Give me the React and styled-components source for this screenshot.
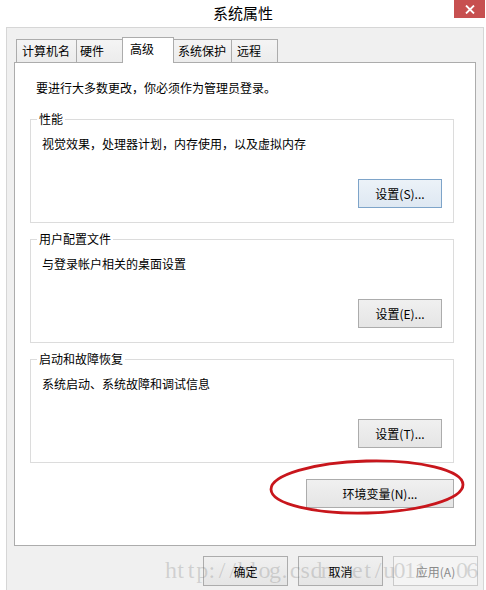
import React from 'react';
import styled, { createGlobalStyle, css } from 'styled-components';

const Global = createGlobalStyle`
  html, body { margin: 0; padding: 0; background: #fff; }
  body {
    font-family: "Noto Sans CJK SC", "Noto Sans", sans-serif;
    font-size: 12px;
    color: #000;
  }
  * { box-sizing: border-box; }
`;

const Window = styled.div`
  position: relative;
  width: 486px;
  height: 590px;
  background: #fff;
  display: flex;
  flex-direction: column;
  overflow: hidden;
`;

const TitleBar = styled.div`
  flex-shrink: 0;
  height: 27px;
  display: grid;
  grid-template-columns: 1fr auto 1fr;
`;

const Title = styled.div`
  grid-column: 2;
  font-size: 15px;
  line-height: 26px;
  color: #000;
`;

const CloseButton = styled.div`
  grid-column: 3;
  justify-self: end;
  align-self: start;
  width: 31px;
  height: 18px;
  margin-right: 1px;
  background: #c75050;
  display: flex;
  align-items: center;
  justify-content: center;
`;

const Body = styled.div`
  flex: 1;
  margin: 0 2px 0 6px;
  border: 1px solid #d6d6d6;
  border-bottom: none;
  background: #f0f0f0;
  padding-top: 9px;
  display: flex;
  flex-direction: column;
`;

const TabRow = styled.div`
  position: relative;
  z-index: 1;
  display: flex;
  align-items: flex-end;
  height: 26px;
  margin: 0 0 -1px 9px;
`;

const Tab = styled.div`
  width: ${(p) => p.$w}px;
  height: 23px;
  margin-bottom: 1px;
  margin-left: -1px;
  &:first-child { margin-left: 0; }
  border: 1px solid #acacac;
  border-bottom: none;
  background: linear-gradient(#f4f4f4, #ececec);
  padding-left: ${(p) => p.$pad}px;
  font-size: 12px;
  line-height: 22px;
  white-space: nowrap;
  ${(p) =>
    p.$active &&
    css`
      position: relative;
      z-index: 2;
      height: 26px;
      margin-bottom: 0;
      background: #fff;
      line-height: 21px;
    `}
`;

const Panel = styled.div`
  height: 484px;
  margin: 0 7px;
  border: 1px solid #acacac;
  background: #fff;
  padding: 17px 21px 0 15px;
  display: flex;
  flex-direction: column;
`;

const Intro = styled.div`
  margin-left: 6px;
  line-height: 16px;
`;

const Group = styled.fieldset`
  margin: ${(p) => (p.$first ? 15 : 8)}px 0 0 0;
  min-width: 0;
  border: 1px solid #dcdcdc;
  padding: 9px 11px 14px 11px;
`;

const Legend = styled.legend`
  margin-left: -5px;
  padding: 0 2px;
  line-height: 16px;
  font-size: 12px;
`;

const Desc = styled.div`
  line-height: 16px;
`;

const ButtonRow = styled.div`
  display: flex;
  justify-content: flex-end;
  gap: 10px;
  margin-top: ${(p) => p.$top || 0}px;
`;

const Button = styled.div`
  width: ${(p) => p.$w}px;
  height: ${(p) => p.$h || 29}px;
  border: 1px solid #acacac;
  background: linear-gradient(#f0f0f0, #e5e5e5);
  display: flex;
  align-items: center;
  justify-content: center;
  font-size: 12px;
  color: #000;
  ${(p) =>
    p.$focus &&
    css`
      border-color: #7ea4c9;
      background: linear-gradient(#ecf2f8, #dee8f2);
    `}
  ${(p) =>
    p.$disabled &&
    css`
      border-color: #cacaca;
      background: #f4f4f4;
      color: #8a8a8a;
    `}
`;

const Highlight = styled.div`
  position: relative;
`;

const Ellipse = styled.svg`
  position: absolute;
  left: -39px;
  top: -21px;
  pointer-events: none;
  overflow: visible;
`;

const BottomRow = styled.div`
  display: flex;
  justify-content: flex-end;
  gap: 10px;
  margin-top: 10px;
  padding-right: 5px;
`;

const Watermark = styled.div`
  position: absolute;
  left: 165px;
  top: 558px;
  display: flex;
  pointer-events: none;
  font-family: "Liberation Serif", serif;
  font-size: 24px;
  line-height: 24px;
  color: rgba(110, 110, 110, 0.25);
`;

const WmChar = styled.span`
  display: inline-block;
  width: 10.4px;
  text-align: center;
  white-space: pre;
`;

const groups = [
  { title: '性能', desc: '视觉效果，处理器计划，内存使用，以及虚拟内存', btn: '设置(S)...', focus: true },
  { title: '用户配置文件', desc: '与登录帐户相关的桌面设置', btn: '设置(E)...' },
  { title: '启动和故障恢复', desc: '系统启动、系统故障和调试信息', btn: '设置(T)...' },
];

const tabs = [
  { label: '计算机名', w: 61, pad: 5 },
  { label: '硬件', w: 47, pad: 3 },
  { label: '高级', w: 52, pad: 7, active: true },
  { label: '系统保护', w: 59, pad: 4 },
  { label: '远程', w: 47, pad: 5 },
];

const watermark = 'http://blog.csdn.net/u011   06';

export default function App() {
  return (
    <>
      <Global />
      <Window>
        <TitleBar>
          <Title>系统属性</Title>
          <CloseButton>
            <svg width="10" height="9" viewBox="0 0 10 9">
              <path d="M1 0.5 L9 8.5 M9 0.5 L1 8.5" stroke="#fff" strokeWidth="1.8" />
            </svg>
          </CloseButton>
        </TitleBar>
        <Body>
          <TabRow>
            {tabs.map((t) => (
              <Tab key={t.label} $w={t.w} $pad={t.pad} $active={t.active}>
                {t.label}
              </Tab>
            ))}
          </TabRow>
          <Panel>
            <Intro>要进行大多数更改，你必须作为管理员登录。</Intro>
            {groups.map((g, i) => (
              <Group key={g.title} $first={i === 0}>
                <Legend>{g.title}</Legend>
                <Desc>{g.desc}</Desc>
                <ButtonRow $top={27}>
                  <Button $w={84} $focus={g.focus}>{g.btn}</Button>
                </ButtonRow>
              </Group>
            ))}
            <ButtonRow $top={16}>
              <Highlight>
                <Button $w={148}>环境变量(N)...</Button>
                <Ellipse width="200" height="60" viewBox="0 0 200 60">
                  <ellipse
                    cx="100"
                    cy="29"
                    rx="96"
                    ry="26"
                    fill="none"
                    stroke="#c8161c"
                    strokeWidth="2.8"
                    transform="rotate(-1.5 100 29)"
                  />
                </Ellipse>
              </Highlight>
            </ButtonRow>
          </Panel>
          <BottomRow>
            <Button $w={85} $h={30}>确定</Button>
            <Button $w={85} $h={30}>取消</Button>
            <Button $w={85} $h={30} $disabled>应用(A)</Button>
          </BottomRow>
        </Body>
        <Watermark>
          {watermark.split('').map((c, i) => (
            <WmChar key={i}>{c}</WmChar>
          ))}
        </Watermark>
      </Window>
    </>
  );
}
